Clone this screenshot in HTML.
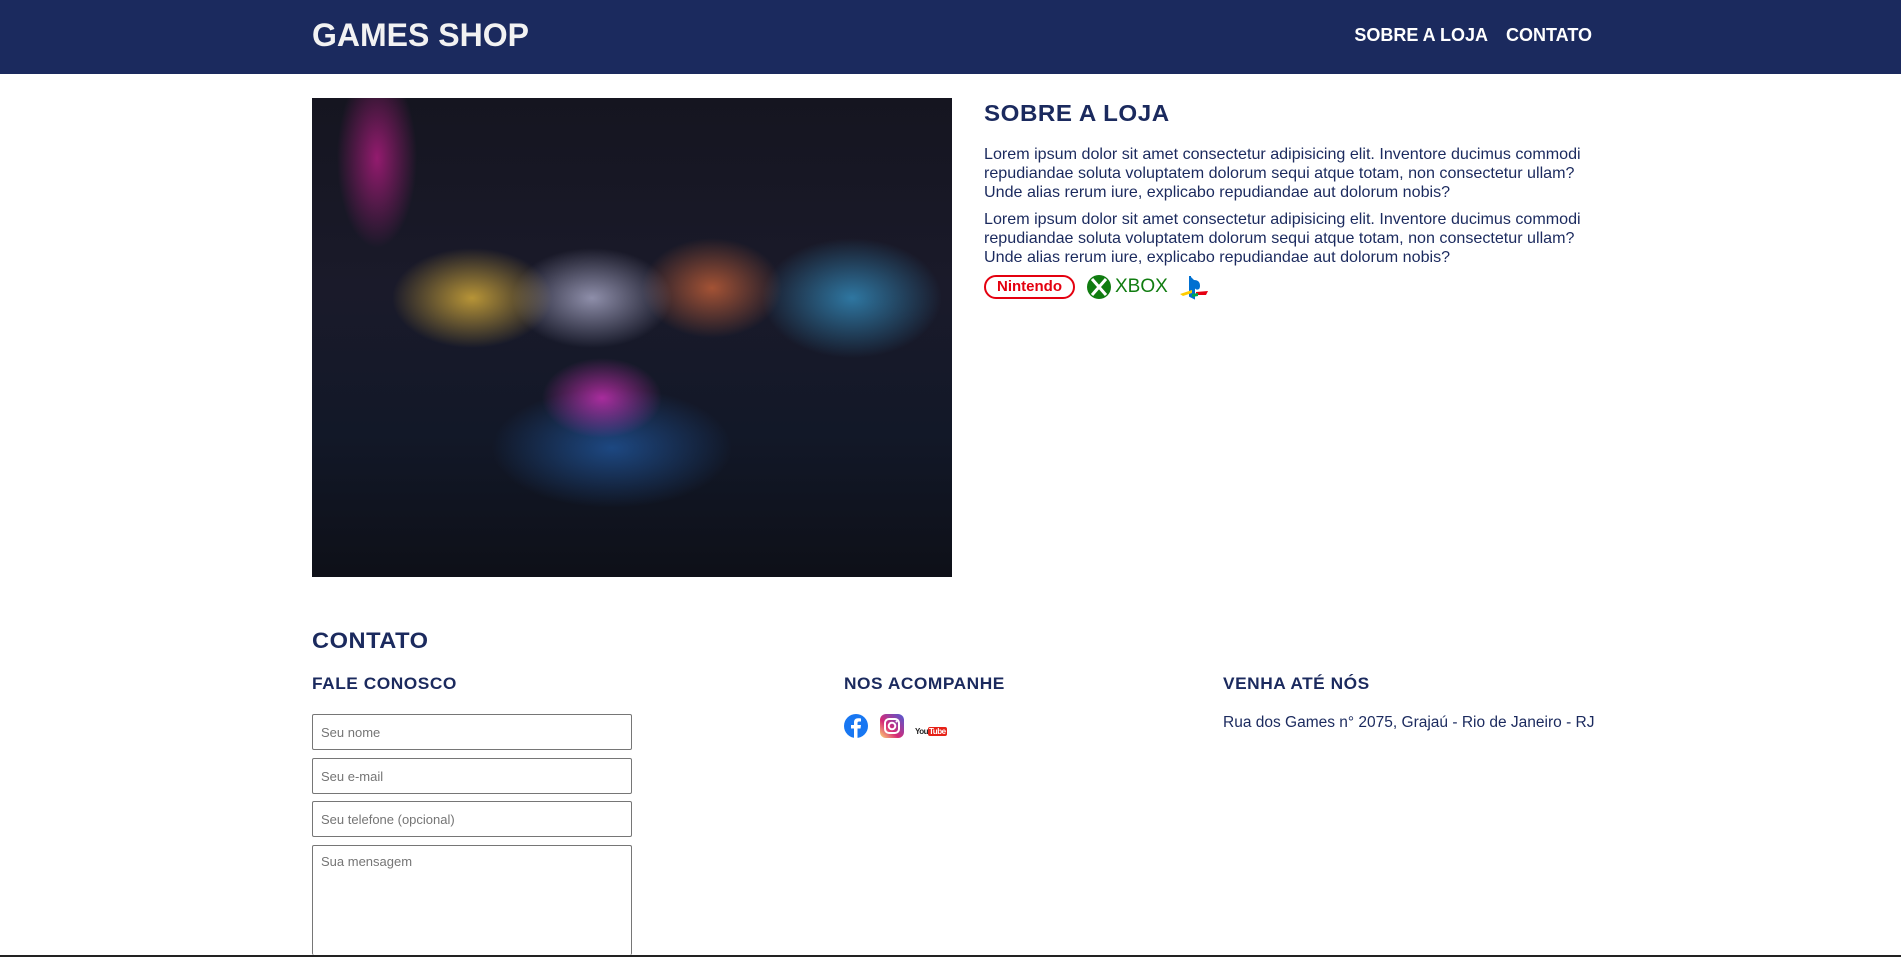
<!DOCTYPE html>
<html style="width:1901px;height:957px;overflow:hidden"><head><meta charset="utf-8"><style>
*{box-sizing:border-box;margin:0;padding:0}
body{width:1901px;height:957px;overflow:hidden;background:#fff;font-family:"Liberation Sans",sans-serif;color:#1b2a5e;position:relative}
.h{font-family:"Liberation Sans",sans-serif;font-weight:bold;color:#1b2a5e;letter-spacing:0.5px;transform:scaleX(1.05);transform-origin:left}
header{position:absolute;left:0;top:0;width:1901px;height:74px;background:#1b2a5e}
.logo{position:absolute;left:312px;top:17px;color:#f2f2f2;font-size:32px;font-weight:900;font-family:"Liberation Sans",sans-serif}
nav{position:absolute;right:309px;top:25px;color:#fff;font-weight:bold;font-size:18px}
nav span{margin-left:18px}
.img{position:absolute;left:312px;top:98px;width:640px;height:479px;background:
radial-gradient(ellipse 60px 40px at 290px 300px,rgba(230,50,200,.7),transparent),
radial-gradient(ellipse 120px 60px at 300px 350px,rgba(40,120,220,.5),transparent),
radial-gradient(ellipse 80px 50px at 160px 200px,rgba(250,200,60,.7),transparent),
radial-gradient(ellipse 80px 50px at 280px 200px,rgba(220,220,255,.6),transparent),
radial-gradient(ellipse 70px 50px at 400px 190px,rgba(255,120,60,.6),transparent),
radial-gradient(ellipse 90px 60px at 540px 200px,rgba(60,180,240,.6),transparent),
radial-gradient(ellipse 40px 90px at 65px 60px,rgba(230,30,160,.6),transparent),
linear-gradient(#151520,#1a1a2a 40%,#121828 70%,#0e1018)}
h2{position:absolute;font-size:24px}
p{font-size:16px;line-height:19px}
.inp{position:absolute;left:312px;width:320px;height:36px;border:1px solid #767676;border-radius:2px;font-size:13px;color:#757575;padding:10px 8px}
</style></head><body>
<header><div class="logo">GAMES SHOP</div><nav><span>SOBRE A LOJA</span><span>CONTATO</span></nav></header>
<div class="img"></div>
<h2 class="h" style="left:984px;top:100px;font-size:23px">SOBRE A LOJA</h2>
<div style="position:absolute;left:984px;top:145px;width:615px">
<p style="font-size:16.1px">Lorem ipsum dolor sit amet consectetur adipisicing elit. Inventore ducimus commodi repudiandae soluta voluptatem dolorum sequi atque totam, non consectetur ullam? Unde alias rerum iure, explicabo repudiandae aut dolorum nobis?</p>
<p style="margin-top:8px;font-size:16.1px">Lorem ipsum dolor sit amet consectetur adipisicing elit. Inventore ducimus commodi repudiandae soluta voluptatem dolorum sequi atque totam, non consectetur ullam? Unde alias rerum iure, explicabo repudiandae aut dolorum nobis?</p>
</div>
<div style="position:absolute;left:984px;top:275px;width:91px;height:24px;border:2px solid #e4000f;border-radius:12px;color:#e4000f;font-weight:bold;font-size:15px;text-align:center;line-height:20px">Nintendo</div>
<svg style="position:absolute;left:1086px;top:274px" width="26" height="26" viewBox="0 0 26 26"><circle cx="13" cy="13" r="12" fill="#107c10"/><path d="M6 5 L20 21 M20 5 L6 21" stroke="#fff" stroke-width="3"/></svg>
<div style="position:absolute;left:1115px;top:276px;color:#107c10;font-size:19px">XBOX</div>
<svg style="position:absolute;left:1178px;top:274px" width="32" height="26" viewBox="0 0 32 26"><path d="M12 2 L12 22 L16 24 L16 7 C20 7 21 9 21 12 C21 15 19 15 18 14 L18 8" fill="#0070d1" stroke="#0070d1" stroke-width="2"/><path d="M2 20 L14 16 L14 19 L5 22Z" fill="#ffcc00"/><path d="M18 18 L30 17 L28 21 L18 21Z" fill="#e60012"/><path d="M14 20 L20 19 L20 22 L14 23Z" fill="#00a650"/></svg>
<h2 class="h" style="left:312px;top:628px;font-size:22.5px">CONTATO</h2>
<h2 class="h" style="left:312px;top:675px;font-size:16.5px">FALE CONOSCO</h2>
<h2 class="h" style="left:844px;top:675px;font-size:16.5px">NOS ACOMPANHE</h2>
<h2 class="h" style="left:1223px;top:675px;font-size:16.5px">VENHA ATÉ NÓS</h2>
<div class="inp" style="top:714px">Seu nome</div>
<div class="inp" style="top:758px">Seu e-mail</div>
<div class="inp" style="top:801px">Seu telefone (opcional)</div>
<div class="inp" style="top:845px;height:110px;padding-top:8px;border-bottom:none">Sua mensagem</div>
<svg style="position:absolute;left:844px;top:714px" width="24" height="24" viewBox="0 0 24 24"><circle cx="12" cy="12" r="12" fill="#1877f2"/><path d="M13.5 24 V14.5 H16.5 L17 11 H13.5 V9 C13.5 8 14 7.5 15 7.5 H17 V4.5 C16 4.3 15 4.3 14 4.3 C11.5 4.3 10 5.8 10 8.5 V11 H7 V14.5 H10 V24Z" fill="#fff"/></svg>
<svg style="position:absolute;left:880px;top:714px" width="24" height="24" viewBox="0 0 24 24"><defs><linearGradient id="ig" x1="0" y1="1" x2="1" y2="0"><stop offset="0" stop-color="#feda75"/><stop offset=".4" stop-color="#d62976"/><stop offset="1" stop-color="#4f5bd5"/></linearGradient></defs><rect width="24" height="24" rx="6" fill="url(#ig)"/><rect x="5" y="5" width="14" height="14" rx="4" fill="none" stroke="#fff" stroke-width="2"/><circle cx="12" cy="12" r="3.3" fill="none" stroke="#fff" stroke-width="2"/><circle cx="16.5" cy="7.5" r="1" fill="#fff"/></svg>
<div style="position:absolute;left:915px;top:727px;font-size:8px;font-weight:bold;color:#222;letter-spacing:-0.5px">You<span style="background:#e62117;color:#fff;border-radius:2px;padding:0 1px">Tube</span></div>
<p style="position:absolute;left:1223px;top:713px;font-size:15.5px">Rua dos Games n° 2075, Grajaú - Rio de Janeiro - RJ</p>
<div style="position:absolute;left:0;top:955px;width:1901px;height:2px;background:#222;z-index:5"></div>
</body></html>
